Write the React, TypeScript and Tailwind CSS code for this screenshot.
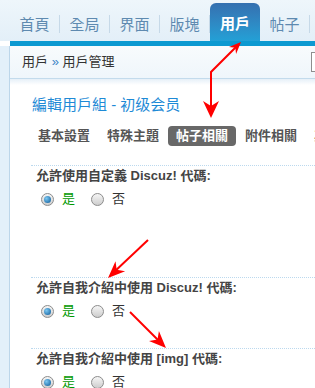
const tabs = ['首頁', '全局', '界面', '版塊', '用戶', '帖子'];
const subTabs = ['基本設置', '特殊主題', '帖子相關', '附件相關', '其他'];

function head(tx: number, ty: number, dx: number, dy: number, L = 16, W = 7, N = 11) {
  const len = Math.hypot(dx, dy);
  const ux = dx / len;
  const uy = dy / len;
  const px = -uy;
  const py = ux;
  const bx = tx - ux * L;
  const by = ty - uy * L;
  const nx = tx - ux * N;
  const ny = ty - uy * N;
  return `${tx},${ty} ${bx + px * W},${by + py * W} ${nx},${ny} ${bx - px * W},${by - py * W}`;
}

function Radio({ checked }: { checked?: boolean }) {
  return (
    <span className="flex h-[13px] w-[13px] shrink-0 items-center justify-center rounded-full border border-[#8c8c8c] bg-linear-to-b from-[#f6f6f6] to-[#cdcdcd]">
      {checked && <span className="h-[7px] w-[7px] rounded-full bg-[radial-gradient(circle_at_35%_35%,#7cc8f2,#0a5897)]" />}
    </span>
  );
}

function Setting({ label, extra }: { label: React.ReactNode; extra?: boolean }) {
  return (
    <div className={`border-t border-dotted border-[#bcd9ee] ${extra ? 'pb-[67px]' : 'pb-[26px]'}`}>
      <div className="h-[20px] pl-[5px] text-[13px] font-bold leading-[20px] text-[#444] whitespace-nowrap">{label}</div>
      <div className="mt-[2px] flex h-[22px] items-center pl-[10px] text-[13px]">
        <Radio checked />
        <span className="ml-[8px] text-[#009900]">是</span>
        <span className="ml-[16px]">
          <Radio />
        </span>
        <span className="ml-[8px] text-[#333]">否</span>
      </div>
    </div>
  );
}

export default function App() {
  return (
    <div className="relative h-[388px] w-[315px] overflow-hidden bg-white font-['Liberation_Sans','Noto_Sans_CJK_TC',sans-serif]">
      <div className="flex h-[41px] bg-linear-to-b from-[#eef6fb] to-[#e3eff8] pl-[10px] pt-[3px]">
        {tabs.map((t) =>
          t === '用戶' ? (
            <div
              key={t}
              className="flex w-[50px] justify-center rounded-t-[6px] bg-linear-to-b from-[#3470b0] to-[#22a0d6] pt-[11px] text-[15px] font-bold leading-[20px] text-white"
            >
              {t}
            </div>
          ) : (
            <div key={t} className="flex">
              <div className="flex w-[49px] justify-center pt-[12px] text-[15px] leading-[20px] text-[#5e8ab0]">{t}</div>
              <div className="mt-[12px] h-[18px] w-px bg-[#c6d9e8]" />
            </div>
          )
        )}
      </div>
      <div className="ml-[10px] h-[5px] bg-[#0c99d1]" />

      <div className="flex h-[342px]">
        <div className="w-[10px] shrink-0 border-r border-[#bcd6ea] bg-[#e3f0fa]" />
        <div className="min-w-0 flex-1">
          <div className="flex h-[33px] items-center border-b border-[#c3dbec] bg-linear-to-b from-[#f8fbfd] to-[#eff6fb] pl-[12px] text-[13px] text-[#333]">
            <span className="w-[289px] shrink-0 whitespace-nowrap">
              用戶 <span className="text-[#3d86c6]">»</span> 用戶管理
            </span>
            <div className="h-[20px] w-[80px] shrink-0 border border-[#8e8e8e] bg-white" />
          </div>
          <div className="h-[6px] bg-linear-to-b from-[#e6f0f8] to-white" />

          <div className="pl-[21px] pt-[10px]">
            <div className="ml-[1px] h-[20px] whitespace-nowrap text-[15px] leading-[20px] text-[#1e8ad6]">編輯用戶組 - 初级会员</div>
            <div className="-ml-[1px] mt-[11px] flex h-[20px] gap-px whitespace-nowrap text-[13px] font-bold leading-[20px]">
              {subTabs.map((s) => (
                <div
                  key={s}
                  className={`shrink-0 rounded-[4px] px-[8px] ${s === '帖子相關' ? 'bg-[#686868] text-white' : 'text-[#555]'}`}
                >
                  {s}
                </div>
              ))}
            </div>

            <div className="mt-[19px]">
              <Setting label="允許使用自定義 Discuz! 代碼:" extra />
              <Setting label="允許自我介紹中使用 Discuz! 代碼:" />
              <Setting label="允許自我介紹中使用 [img] 代碼:" />
            </div>
          </div>
        </div>
      </div>

      <svg className="pointer-events-none absolute inset-0" width="315" height="388" viewBox="0 0 315 388">
        <g stroke="#ff0000" strokeWidth="2" fill="none">
          <polyline points="237,46 211,72 211,108" />
          <line x1="148" y1="240" x2="113" y2="273" />
          <line x1="130" y1="312" x2="160" y2="342" />
        </g>
        <g fill="#ff0000">
          <polygon points={head(241, 42, 1, -1, 12, 5, 8)} />
          <polygon points={head(211, 118, 0, 1, 17, 8, 12)} />
          <polygon points={head(108, 278, -40, 38, 17, 7, 12)} />
          <polygon points={head(166, 348, 1, 1, 17, 7, 12)} />
        </g>
      </svg>
    </div>
  );
}
